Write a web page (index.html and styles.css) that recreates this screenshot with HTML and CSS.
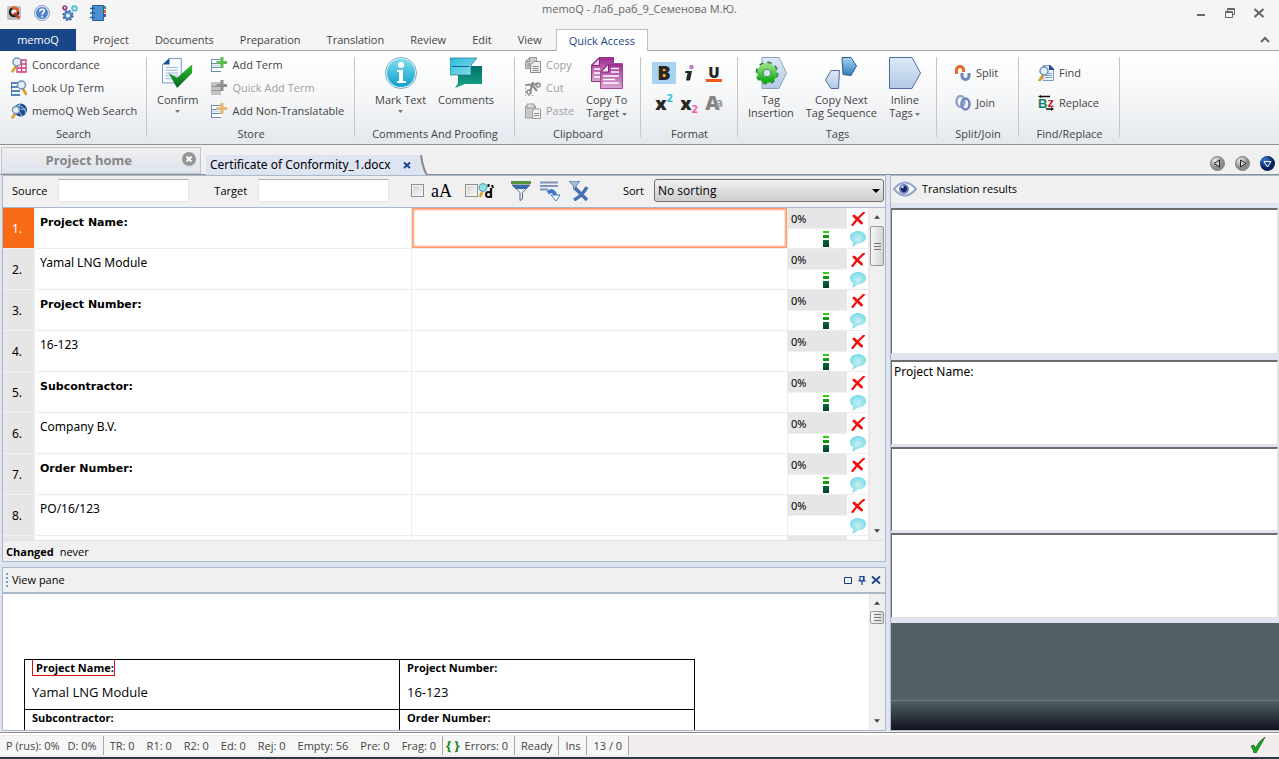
FILE: index.html
```html
<!DOCTYPE html>
<html lang="en">
<head>
<meta charset="utf-8">
<title>memoQ - Лаб_раб_9_Семенова М.Ю.</title>
<link rel="stylesheet" href="styles.css">
</head>
<body>
<svg class="defs" aria-hidden="true">
  <defs>
    <linearGradient id="gBlue" x1="0" y1="0" x2="0" y2="1"><stop offset="0" stop-color="#a9d2f3"/><stop offset="1" stop-color="#2f7fb8"/></linearGradient>
    <linearGradient id="gPale" x1="0" y1="0" x2="0" y2="1"><stop offset="0" stop-color="#dceaf8"/><stop offset="1" stop-color="#b3c9e4"/></linearGradient>
    <linearGradient id="gGreen" x1="0" y1="0" x2="0" y2="1"><stop offset="0" stop-color="#2fc522"/><stop offset="1" stop-color="#04602c"/></linearGradient>
    <linearGradient id="gGear" x1="0" y1="0" x2="0" y2="1"><stop offset="0" stop-color="#8fe07c"/><stop offset="1" stop-color="#12b012"/></linearGradient>
    <linearGradient id="gCyan" x1="0" y1="0" x2="0" y2="1"><stop offset="0" stop-color="#7fdcec"/><stop offset="1" stop-color="#0b9fd0"/></linearGradient>
    <linearGradient id="gTeal" x1="0" y1="0" x2="0" y2="1"><stop offset="0" stop-color="#00706a"/><stop offset="1" stop-color="#17a888"/></linearGradient>
    <linearGradient id="gAqua" x1="0" y1="0" x2="1" y2="1"><stop offset="0" stop-color="#2ab8d8"/><stop offset="1" stop-color="#8be4ec"/></linearGradient>
    <linearGradient id="gPurple" x1="0" y1="0" x2="0" y2="1"><stop offset="0" stop-color="#9c2b8e"/><stop offset="1" stop-color="#dba6d4"/></linearGradient>
    <radialGradient id="gBubble"><stop offset="0" stop-color="#c9eef2"/><stop offset="1" stop-color="#7cdde8"/></radialGradient>
    <radialGradient id="gBall" cx=".35" cy=".3"><stop offset="0" stop-color="#efefef"/><stop offset="1" stop-color="#8a8a8a"/></radialGradient>
    <radialGradient id="gNavy" cx=".35" cy=".3"><stop offset="0" stop-color="#3b7fd0"/><stop offset="1" stop-color="#08215c"/></radialGradient>
  </defs>
  <symbol id="i-lens" viewBox="0 0 16 16"><path d="M5 9 1.500 14.500" stroke="#dd9a1c" stroke-width="2.500" stroke-linecap="round"/><circle cx="6" cy="5" r="4" fill="#e2eff9" stroke="#7190b5" stroke-width="1.500"/></symbol>
  <symbol id="i-conc" viewBox="0 0 16 16"><path d="M6 3h9v12H6zM6 7h9M6 11h9M10.500 3v12" fill="#fff" stroke="#d8377c" stroke-width="1.300"/><use href="#i-lens"/></symbol>
  <symbol id="i-look" viewBox="0 0 16 16"><path d="M0 3h9M0 3v12h9M0 7h9M0 11h9" fill="none" stroke="#1d5fa8" stroke-width="1.500"/><path d="m12 9 3 5" stroke="#dd9a1c" stroke-width="2.500" stroke-linecap="round"/><circle cx="10.500" cy="5" r="4" fill="#e2eff9" stroke="#7190b5" stroke-width="1.500"/></symbol>
  <symbol id="i-web" viewBox="0 0 16 16"><circle cx="9.500" cy="7" r="6.500" fill="#1e4a90"/><path d="M6 2q8 1 9 9M4 9q5-4 11-3M9 1q-3 6 2 12" stroke="#a8c8ee" fill="none"/><path d="M4 11 1.500 14.500" stroke="#dd9a1c" stroke-width="2.500" stroke-linecap="round"/><circle cx="5" cy="7" r="3.500" fill="#e2eff9" stroke="#7190b5" stroke-width="1.300"/></symbol>
  <symbol id="i-rows" viewBox="0 0 16 16"><path d="M.5 3h10v11H.5z" fill="#fff"/><path d="M0 2.500h10M0 6.500h10M0 10.500h11M0 14.500h10M.5 3v11" fill="none" stroke="#6c8fba"/><path d="M1 8.500h9" stroke="#cfdcec" stroke-width="2"/></symbol>
  <symbol id="i-add" viewBox="0 0 16 16"><use href="#i-rows"/><path d="M11 0v11M5.500 5.500H16" stroke="#5dbd52" stroke-width="3"/></symbol>
  <symbol id="i-addgray" viewBox="0 0 16 16"><path d="M0 2h10v13H0z" fill="#c4c4c4"/><path d="M0 6.500h10M0 10.500h10" stroke="#999"/><path d="M11 0v11M5.500 5.500H16" stroke="#8f8f8f" stroke-width="3"/></symbol>
  <symbol id="i-addtan" viewBox="0 0 16 16"><use href="#i-rows"/><path d="M11 0v11M5.500 5.500H16" stroke="#e8b877" stroke-width="3"/></symbol>
  <symbol id="i-confirm" viewBox="0 0 34 32"><path d="M8 .5h12.500v26H.5V7z" fill="#f7faff" stroke="#6f90c5"/><path d="M8 0v7H1z" fill="#154a9c"/><path d="M4 10h13M4 13h13M4 16h13M4 19h13M4 22h13" stroke="#9ab0d4"/><path d="m7 16 9 5L32 7v9L16 32z" fill="url(#gGreen)"/></symbol>
  <symbol id="i-info" viewBox="0 0 32 32"><circle cx="16" cy="16" r="15.500" fill="#eef9fd" stroke="#76abc6"/><circle cx="16" cy="16" r="14" fill="url(#gCyan)"/><circle cx="16" cy="8" r="3" fill="#fff"/><path d="M12 13h6v11h3v2h-9v-2h2v-9h-2z" fill="#fff"/></symbol>
  <symbol id="i-comments" viewBox="0 0 32 32"><path d="M14 9h18v18H15l-10 4 3-5v-9h6z" fill="url(#gTeal)"/><path d="M0 1h27l-6 7v10H0z" fill="url(#gAqua)" stroke="#17758b" stroke-width=".7"/><path d="M2 9.500h17" stroke="#1c5a9c"/></symbol>
  <symbol id="i-copygray" viewBox="0 0 16 16"><path d="M4.500.5h7v11h-11v-7z" fill="#ccc" stroke="#999"/><path d="M4.500 1v3.500H1M2 7h4M2 9h3" fill="none" stroke="#8c8c8c"/><path d="M9 4.500h6.500v11h-10V8z" fill="#eee" stroke="#8c8c8c"/><path d="M7.500 9.500h6M7.500 11.500h6M7.500 13.500h6" stroke="#8c8c8c"/></symbol>
  <symbol id="i-cut" viewBox="0 0 16 16"><path d="M.5 4v11.500h9" fill="none" stroke="#aaa" stroke-dasharray="2 1.500"/><path d="m1 5 12-1M5 12l3-10M7 5l5 6" stroke="#8c8c8c" stroke-width="2.200"/><circle cx="13" cy="5" r="2" fill="none" stroke="#8c8c8c" stroke-width="1.500"/><circle cx="4" cy="12" r="2" fill="none" stroke="#8c8c8c" stroke-width="1.500"/></symbol>
  <symbol id="i-paste" viewBox="0 0 16 16"><path d="M.5 3h10v12H.5z" fill="#c8c8c8" stroke="#a0a0a0"/><path d="M2 1h7v4H2z" fill="#dedede" stroke="#999"/><path d="M9 6h6.500v9.500h-8V8z" fill="#f3f3f3" stroke="#999"/><path d="M9 10.500h5M9 12.500h5" stroke="#8c8c8c"/></symbol>
  <symbol id="i-copyto" viewBox="0 0 32 32"><path d="M8 .5h14.500v24H.5V8z" fill="url(#gPurple)" stroke="#92348a"/><path d="M8.500 1v7.500H1z" fill="#ecd0e8" stroke="#8c1f7e"/><path d="M3 12h6M3 16h6M3 20h6" stroke="#fff" stroke-width="1.500"/><path d="M17 6.500h14.500v25h-22v-17z" fill="url(#gPurple)" stroke="#a2499a"/><path d="M17.500 7v8H10z" fill="#f4e2f1" stroke="#8c1f7e"/><path d="M20 11.500h8M20 15h8M12 19h16M12 22.500h12M12 26h16" stroke="#fff" stroke-width="1.500"/></symbol>
  <symbol id="i-gear" viewBox="0 0 32 32"><path d="M7 .5h17L31.500 16 24 31.500H7z" fill="url(#gPale)" stroke="#8da3bd"/><circle cx="12" cy="16" r="9.500" fill="none" stroke="#3f7a4a" stroke-width="4" stroke-dasharray="4 3.460"/><circle cx="12" cy="16" r="7" fill="#d5e6f2" stroke="url(#gGear)" stroke-width="6"/><circle cx="12" cy="16" r="3.800" fill="#d5e6f2" stroke="#56875f"/></symbol>
  <symbol id="i-seq" viewBox="0 0 32 32"><path d="M17 .5h9L31.500 9 26 18.500l-8-1z" fill="url(#gBlue)" stroke="#2c5a97"/><path d="M6 13.500h8.500l-1 18H6L.5 23z" fill="url(#gPale)" stroke="#5066a8"/></symbol>
  <symbol id="i-tag" viewBox="0 0 32 32"><path d="M.5.5H23L31.500 16 23 31.500H.5z" fill="url(#gPale)" stroke="#4e6ba6"/></symbol>
  <symbol id="i-split" viewBox="0 0 16 16"><path d="M1.500 9V5a3.500 3.500 0 0 1 7 0v2" fill="none" stroke="#ee6424" stroke-width="3"/><path d="M7 8v3a3.500 3.500 0 0 0 7 0V8" fill="none" stroke="#6b86c0" stroke-width="3"/></symbol>
  <symbol id="i-join" viewBox="0 0 16 16"><g fill="none" stroke="#8fa3cc" stroke-width="2.500"><ellipse cx="5.500" cy="6.500" rx="4" ry="5.500"/><ellipse cx="10.500" cy="9" rx="4" ry="5.500" stroke="#6b86c0"/></g></symbol>
  <symbol id="i-find" viewBox="0 0 16 16"><path d="M5 .5h7L15.500 4v11.500H5z" fill="#edf4fc" stroke="#7899c8"/><path d="M11 0h1l4 4v1h-5z" fill="#154a9c"/><path d="M7 8.500h7M7 10.500h7M7 12.500h7" stroke="#7f9cc8"/><use href="#i-lens" y="1"/></symbol>
  <symbol id="i-arrows" viewBox="0 0 16 16"><path d="M0 1.500 3 0v.8h9v1.400H3V3zM16 14l-3-2v1.200H8v1.600h5V16z" fill="#111"/></symbol>
  <symbol id="i-x" viewBox="0 0 14 14"><path d="M3 4 10.500 11" fill="none" stroke="#f01010" stroke-width="3" stroke-linecap="round"/><path d="M13 .5C9 4 5 8 1.500 13" fill="none" stroke="#f01010" stroke-width="2.200" stroke-linecap="round"/></symbol>
  <symbol id="i-bubble" viewBox="0 0 16 16"><path d="M8 0c4.400 0 8 2.500 8 6.200s-3.600 6.200-8 6.200L2 16l1.500-4.500C1.500 10.500 0 8.500 0 6.200 0 2.500 3.600 0 8 0z" fill="url(#gBubble)"/></symbol>
  <symbol id="i-up" viewBox="0 0 7 4"><path d="M3.500 0 7 4H0z" fill="#444"/></symbol>
  <symbol id="i-down" viewBox="0 0 7 4"><path d="M3.500 4 7 0H0z" fill="#444"/></symbol>
  <symbol id="i-caret" viewBox="0 0 5 3"><path d="M2.500 3 5 0H0z" fill="#777"/></symbol>
</svg>

<header class="titlebar">
  <div class="quick">
    <svg class="i16" viewBox="0 0 16 16"><rect x="1" y="1" width="14" height="14" rx="2" fill="#c3bfba"/><circle cx="8" cy="7" r="4" fill="#eee" stroke="#222" stroke-width="2.500"/><path d="M6 3.200A4 4 0 0 1 12 7" fill="none" stroke="#ef5a24" stroke-width="2.500"/><path d="m8 8 5 5" stroke="#c9371c" stroke-width="2.500"/></svg>
    <svg class="i16" viewBox="0 0 16 16"><circle cx="8" cy="8" r="7.500" fill="#dfe6f0" stroke="#8ba3c9"/><circle cx="8" cy="8" r="6" fill="#4f83cf"/><path d="M5.800 6.500c0-3 4.600-2.900 4.600-.4 0 1.600-2.300 1.500-2.300 3.600M8.100 10.800v1.700" fill="none" stroke="#fff" stroke-width="1.500"/></svg>
    <svg class="i16" viewBox="0 0 16 16"><circle cx="6" cy="10.500" r="3.200" fill="none" stroke="#4f86c6" stroke-width="2.500"/><circle cx="6" cy="10.500" r="4.800" fill="none" stroke="#2d5d9c" stroke-width="1.500" stroke-dasharray="2 1.770"/><circle cx="2.800" cy="2.800" r="1.800" fill="none" stroke="#8c3a8c" stroke-width="1.700"/><circle cx="12.500" cy="3.500" r="2.300" fill="none" stroke="#4fc3dc" stroke-width="2"/></svg>
    <svg class="i16" viewBox="0 0 16 16"><path d="M12 1h4v3h-4z" fill="#3aa050"/><path d="M12 5h4v3h-4z" fill="#ee6424"/><path d="M12 9h4v3h-4z" fill="#7b3a96"/><path d="M2.500.5h11v15h-11z" fill="#4d91cd" stroke="#25609d"/><path d="M0 3.500h5M0 8h5M0 12.500h5" stroke="#25609d" stroke-width="1.500"/></svg>
  </div>
  <h1 class="title">memoQ - Лаб_раб_9_Семенова М.Ю.</h1>
  <div class="winbtns">
    <button aria-label="Minimize"><svg class="i12" viewBox="0 0 12 12"><path d="M2 8h8" stroke="#666" stroke-width="2"/></svg></button>
    <button aria-label="Restore"><svg class="i12" viewBox="0 0 12 12"><path d="M1.500 4.500h7v6h-7zM1 5.500h8M3.500 4V1.500h7v6H9M3 2.500h8" fill="none" stroke="#666"/></svg></button>
    <button aria-label="Close"><svg class="i12" viewBox="0 0 12 12"><path d="m1.500 2 9 8m0-8-9 8" stroke="#666" stroke-width="2.200"/></svg></button>
  </div>
</header>

<nav class="tabs">
  <button class="tab tab-main">memoQ</button>
  <button class="tab">Project</button>
  <button class="tab">Documents</button>
  <button class="tab">Preparation</button>
  <button class="tab">Translation</button>
  <button class="tab">Review</button>
  <button class="tab">Edit</button>
  <button class="tab">View</button>
  <button class="tab tab-active">Quick Access</button>
  <button class="collapse" aria-label="Collapse ribbon"><svg class="i10" viewBox="0 0 10 10"><path d="m1 7 4-4 4 4" fill="none" stroke="#666" stroke-width="2"/></svg></button>
</nav>

<section class="ribbon">
  <div class="group g-search">
    <div class="stack">
      <button class="cmd"><svg class="i16"><use href="#i-conc"/></svg>Concordance</button>
      <button class="cmd"><svg class="i16"><use href="#i-look"/></svg>Look Up Term</button>
      <button class="cmd"><svg class="i16"><use href="#i-web"/></svg>memoQ Web Search</button>
    </div>
    <h2>Search</h2>
  </div>
  <div class="group g-store">
    <div class="items">
      <button class="big"><svg class="i32"><use href="#i-confirm"/></svg><span>Confirm</span><svg class="caret"><use href="#i-caret"/></svg></button>
      <div class="stack">
        <button class="cmd"><svg class="i16"><use href="#i-add"/></svg>Add Term</button>
        <button class="cmd" disabled><svg class="i16"><use href="#i-addgray"/></svg>Quick Add Term</button>
        <button class="cmd"><svg class="i16"><use href="#i-addtan"/></svg>Add Non-Translatable</button>
      </div>
    </div>
    <h2>Store</h2>
  </div>
  <div class="group g-comments">
    <div class="items">
      <button class="big"><svg class="i32"><use href="#i-info"/></svg><span>Mark Text</span><svg class="caret"><use href="#i-caret"/></svg></button>
      <button class="big"><svg class="i32"><use href="#i-comments"/></svg><span>Comments</span></button>
    </div>
    <h2>Comments And Proofing</h2>
  </div>
  <div class="group g-clip">
    <div class="items">
      <div class="stack">
        <button class="cmd" disabled><svg class="i16"><use href="#i-copygray"/></svg>Copy</button>
        <button class="cmd" disabled><svg class="i16"><use href="#i-cut"/></svg>Cut</button>
        <button class="cmd" disabled><svg class="i16"><use href="#i-paste"/></svg>Paste</button>
      </div>
      <button class="big"><svg class="i32"><use href="#i-copyto"/></svg><span>Copy To</span><span>Target <svg class="caret"><use href="#i-caret"/></svg></span></button>
    </div>
    <h2>Clipboard</h2>
  </div>
  <div class="group g-format">
    <div class="formats">
      <button class="fmt fmt-on"><b>B</b></button>
      <button class="fmt fmt-i" aria-label="Italic"><svg class="i16" viewBox="0 0 16 16"><circle cx="10.500" cy="2" r="2.200" fill="#b77ac0"/><path d="M4.500 6H11L9 15.500H5L6.500 8H4z" fill="#262626"/></svg></button>
      <button class="fmt fmt-u"><b>U</b></button>
      <button class="fmt"><b>x</b><sup>2</sup></button>
      <button class="fmt"><b>x</b><sub>2</sub></button>
      <button class="fmt fmt-a"><b>A</b><small>a</small></button>
    </div>
    <h2>Format</h2>
  </div>
  <div class="group g-tags">
    <div class="items">
      <button class="big"><svg class="i32"><use href="#i-gear"/></svg><span>Tag</span><span>Insertion</span></button>
      <button class="big"><svg class="i32"><use href="#i-seq"/></svg><span>Copy Next</span><span>Tag Sequence</span></button>
      <button class="big"><svg class="i32"><use href="#i-tag"/></svg><span>Inline</span><span>Tags <svg class="caret"><use href="#i-caret"/></svg></span></button>
    </div>
    <h2>Tags</h2>
  </div>
  <div class="group g-split">
    <div class="stack stack-two">
      <button class="cmd"><svg class="i16"><use href="#i-split"/></svg>Split</button>
      <button class="cmd"><svg class="i16"><use href="#i-join"/></svg>Join</button>
    </div>
    <h2>Split/Join</h2>
  </div>
  <div class="group g-find">
    <div class="stack stack-two">
      <button class="cmd"><svg class="i16"><use href="#i-find"/></svg>Find</button>
      <button class="cmd"><span class="bz"><svg class="i16"><use href="#i-arrows"/></svg><b>B</b><i>z</i></span>Replace</button>
    </div>
    <h2>Find/Replace</h2>
  </div>
</section>

<div class="doctabs">
  <button class="doc-home">Project home<svg class="i14" viewBox="0 0 14 14"><circle cx="7" cy="7" r="7" fill="#969696"/><path d="m4.500 4.500 5 5m0-5-5 5" stroke="#fff" stroke-width="2"/></svg></button>
  <button class="doc-open">Certificate of Conformity_1.docx<svg class="i8" viewBox="0 0 8 8"><path d="m1 1.500 6 5.500m0-5.500L1 7" stroke="#153f8f" stroke-width="1.800"/></svg></button>
  <svg class="slant" viewBox="0 0 10 20"><path d="M0 0h3l5 20H0z" fill="#dfe4f2"/><path d="M3 0q2 14 6 20" fill="none" stroke="#8b8b8b" stroke-width="2"/></svg>
  <div class="nav">
    <button aria-label="Previous"><svg class="i15" viewBox="0 0 15 15"><circle cx="7.500" cy="7.500" r="7" fill="url(#gBall)" stroke="#808080"/><path d="M9.500 4v7L4 7.500z" fill="#ccc" stroke="#222"/></svg></button>
    <button aria-label="Next"><svg class="i15" viewBox="0 0 15 15"><circle cx="7.500" cy="7.500" r="7" fill="url(#gBall)" stroke="#808080"/><path d="M5.500 4v7L11 7.500z" fill="#ccc" stroke="#222"/></svg></button>
    <button aria-label="List"><svg class="i15" viewBox="0 0 15 15"><circle cx="7.500" cy="7.500" r="7.500" fill="url(#gNavy)"/><path d="M4 5.500h7L7.500 11z" fill="#164a94" stroke="#fff"/></svg></button>
  </div>
</div>

<main class="work">
  <div class="left">
    <section class="editor">
      <div class="filter">
        <label for="src">Source</label><input id="src" class="box" type="text">
        <label for="trg" class="lab-t">Target</label><input id="trg" class="box" type="text">
        <label class="chk chk-a"><input type="checkbox"><span>aA</span></label>
        <label class="chk"><input type="checkbox" aria-label="Regular expression"><svg class="i16" viewBox="0 0 16 16"><path d="m4 9-2 5" stroke="#e0a31c" stroke-width="2.500"/><circle cx="5" cy="4.500" r="4" fill="#8fe0ea" stroke="#5a9cb5"/><path d="M10.500 1v3M14 2l1 3" stroke="#111" stroke-width="2"/><path d="M13 5v10" stroke="#111" stroke-width="2.200"/><circle cx="10.500" cy="11.500" r="2.500" fill="#fff" stroke="#111" stroke-width="2"/></svg></label>
        <div class="tools">
          <button aria-label="Filter"><svg class="i20" viewBox="0 0 20 20"><path d="M0 0h20v3H0z" fill="#57963c"/><path d="M1 4h18l-7.500 7.500V18L9 19.500v-8z" fill="#edf2f9" stroke="#5d6980"/><path d="M1 4h18l-4 4H5z" fill="#3c68ad"/></svg></button>
          <button aria-label="Go to next"><svg class="i20" viewBox="0 0 20 20"><path d="M0 1.500h18M0 5h18M0 8.500h8" stroke="#7f93bd" stroke-width="2"/><path d="M8 12q5-5 7.500 3" fill="none" stroke="#3f78c4" stroke-width="4"/><path d="M11 14h9l-4 6z" fill="#fff" stroke="#3f78c4"/></svg></button>
          <button aria-label="Clear filter"><svg class="i20" viewBox="0 0 20 20"><path d="M0 0h11L7 5v5L4.500 8V5z" fill="#a9bbd8" stroke="#5d7fb8"/><path d="m6 7 12 12M18 6Q13 15 5 19" fill="none" stroke="#4772b2" stroke-width="3.500"/></svg></button>
        </div>
        <label for="sort">Sort</label>
        <select id="sort"><option>No sorting</option></select>
      </div>
      <div class="gridwrap">
        <div class="rows">
          <table class="seg">
            <colgroup><col class="c-num"><col><col><col class="c-st"></colgroup>
            <tr class="cur"><th>1.</th><td><b>Project Name:</b></td><td class="tgt"></td><td class="st"><div class="stat"><span>0%</span><svg class="i14"><use href="#i-x"/></svg><i></i><svg class="i16"><use href="#i-bubble"/></svg></div></td></tr>
            <tr><th>2.</th><td>Yamal LNG Module</td><td></td><td class="st"><div class="stat"><span>0%</span><svg class="i14"><use href="#i-x"/></svg><i></i><svg class="i16"><use href="#i-bubble"/></svg></div></td></tr>
            <tr><th>3.</th><td><b>Project Number:</b></td><td></td><td class="st"><div class="stat"><span>0%</span><svg class="i14"><use href="#i-x"/></svg><i></i><svg class="i16"><use href="#i-bubble"/></svg></div></td></tr>
            <tr><th>4.</th><td>16-123</td><td></td><td class="st"><div class="stat"><span>0%</span><svg class="i14"><use href="#i-x"/></svg><i></i><svg class="i16"><use href="#i-bubble"/></svg></div></td></tr>
            <tr><th>5.</th><td><b>Subcontractor:</b></td><td></td><td class="st"><div class="stat"><span>0%</span><svg class="i14"><use href="#i-x"/></svg><i></i><svg class="i16"><use href="#i-bubble"/></svg></div></td></tr>
            <tr><th>6.</th><td>Company B.V.</td><td></td><td class="st"><div class="stat"><span>0%</span><svg class="i14"><use href="#i-x"/></svg><i></i><svg class="i16"><use href="#i-bubble"/></svg></div></td></tr>
            <tr><th>7.</th><td><b>Order Number:</b></td><td></td><td class="st"><div class="stat"><span>0%</span><svg class="i14"><use href="#i-x"/></svg><i></i><svg class="i16"><use href="#i-bubble"/></svg></div></td></tr>
            <tr><th>8.</th><td>PO/16/123</td><td></td><td class="st"><div class="stat"><span>0%</span><svg class="i14"><use href="#i-x"/></svg><i class="none"></i><svg class="i16"><use href="#i-bubble"/></svg></div></td></tr>
            <tr><th></th><td></td><td></td><td class="st"><div class="stat"><span></span><svg class="i14"><use href="#i-x"/></svg></div></td></tr>
          </table>
        </div>
        <div class="scroll"><svg class="arrow"><use href="#i-up"/></svg><div class="thumb"></div><svg class="arrow arrow-end"><use href="#i-down"/></svg></div>
      </div>
      <p class="changed"><b>Changed</b> <span>never</span></p>
    </section>
    <section class="viewpane">
      <div class="vp-head"><i class="grip"></i><h2>View pane</h2>
        <button aria-label="Maximize"><svg class="i10" viewBox="0 0 10 10"><path d="M1.500 2.500h7v6h-7z" fill="none" stroke="#153f8f"/></svg></button>
        <button aria-label="Pin"><svg class="i10" viewBox="0 0 10 10"><path d="M3 5.500V1.500h4v4M6.500 1v5M1.500 5.800h7M5 6v4" fill="none" stroke="#153f8f" stroke-width="1.200"/></svg></button>
        <button aria-label="Close"><svg class="i10" viewBox="0 0 10 10"><path d="m1 1.500 8 7m0-7-8 7" stroke="#153f8f" stroke-width="1.700"/></svg></button>
      </div>
      <div class="vp-body">
        <div class="page">
          <table class="preview">
            <tr><td class="p-first"><b class="mark">Project Name:</b><p>Yamal LNG Module</p></td><td><b>Project Number:</b><p>16-123</p></td></tr>
            <tr><td><b>Subcontractor:</b></td><td><b>Order Number:</b></td></tr>
          </table>
        </div>
        <div class="scroll"><svg class="arrow"><use href="#i-up"/></svg><div class="thumb thumb-s"></div><svg class="arrow arrow-end"><use href="#i-down"/></svg></div>
      </div>
    </section>
  </div>
  <aside class="right">
    <div class="r-head"><svg class="eye" viewBox="0 0 24 16"><path d="M1 8Q12-5 23 8 12 21 1 8z" fill="#f6f8fc" stroke="#98a4cb" stroke-width="2"/><circle cx="11" cy="8" r="5" fill="#6c80bf"/><circle cx="11" cy="8" r="3" fill="#14225e"/><circle cx="9.500" cy="6" r="1.200" fill="#dbe3f7"/></svg><h2>Translation results</h2></div>
    <div class="pane pane-tall"></div>
    <div class="pane">Project Name:</div>
    <div class="pane"></div>
    <div class="pane"></div>
    <div class="dark"><div class="glow"></div></div>
  </aside>
</main>

<footer class="status">
  <div class="s-cell s-one"><span>P (rus): 0%</span><span>D: 0%</span></div>
  <div class="s-cell s-two"><span>TR: 0</span><span>R1: 0</span><span>R2: 0</span><span>Ed: 0</span><span>Rej: 0</span><span>Empty: 56</span><span>Pre: 0</span><span>Frag: 0</span></div>
  <div class="s-cell s-err"><b>{ }</b><span>Errors: 0</span></div>
  <div class="s-cell">Ready</div>
  <div class="s-cell">Ins</div>
  <div class="s-cell">13 / 0</div>
  <svg class="i16 ok" viewBox="0 0 16 16"><path d="m1 9 3-1 1.500 3Q9 4 15 0q-3 6-9 16H4Q3 12 1 9z" fill="#18a51c" stroke="#064d14" stroke-width=".6"/></svg>
</footer>
</body>
</html>
```
FILE: styles.css
```css
* { box-sizing: border-box; }
body {
  margin: 0; height: 100vh; overflow: hidden;
  display: flex; flex-direction: column;
  font: 11px/16px "Open Sans", "Noto Sans", sans-serif;
  color: #444; background: #f0f0f0;
}
h1, h2, p { margin: 0; font-size: inherit; font-weight: normal; }
button { margin: 0; padding: 0; border: 0; background: none; font: inherit; color: inherit; }
svg { display: block; flex: none; }
.defs { position: absolute; width: 0; height: 0; }
.i8 { width: 8px; height: 8px; }
.i10 { width: 10px; height: 10px; }
.i12 { width: 12px; height: 12px; }
.i14 { width: 14px; height: 14px; }
.i15 { width: 15px; height: 15px; }
.i16 { width: 16px; height: 16px; }
.i20 { width: 20px; height: 20px; }
.i32 { width: 32px; height: 32px; }

.titlebar { height: 29px; display: grid; grid-template-columns: 1fr auto 1fr; background: #f5f5f5; flex: none; }
.quick { display: flex; gap: 12px; padding: 5px 6px; }
.title { color: #666; padding-top: 1px; }
.winbtns { display: flex; gap: 17px; justify-content: flex-end; padding: 7px 14px 0 0; align-items: flex-start; }

.tabs { display: flex; flex: none; height: 22px; background: #f5f5f5; box-shadow: inset 0 -1px #a3a8b0; }
.tab { padding: 0 12px; margin-left: 2px; line-height: 22px; }
.tab-main { background: #194688; color: #fff; width: 76px; margin: 0 3px 0 0; }
.tab-active { color: #194688; background: #fff; border: 1px solid #bcbfc5; border-bottom: 0; }
.collapse { margin-left: auto; padding-right: 9px; }

.ribbon {
  display: flex; flex: none; height: 94px; padding-top: 2px;
  background: linear-gradient(#fff, #f7f8f9 45%, #e4e8ed);
  border-bottom: 1px solid #8a929b;
}
.group { display: flex; flex-direction: column; background: linear-gradient(#c3c6ca, #c3c6ca) right 4px / 1px 80px no-repeat; }
.group h2 { text-align: center; line-height: 20px; padding-top: 2px; }
.stack { display: flex; flex-direction: column; height: 69px; align-items: flex-start; }
.stack-two { gap: 7px; padding-top: 8px; }
.cmd { display: flex; align-items: center; gap: 5px; height: 23px; white-space: nowrap; }
.cmd:disabled { color: #a0a0a0; }
.items { display: flex; height: 69px; }
.big { display: flex; flex-direction: column; align-items: center; padding-top: 4px; line-height: 13px; white-space: nowrap; }
.big .i32 { margin-bottom: 4px; }
.big > .caret { margin-top: 4px; }
.caret { width: 5px; height: 3px; display: inline-block; vertical-align: middle; }
.g-search { width: 147px; }
.g-search .stack { padding-left: 11px; }
.g-store { width: 208px; }
.g-store .items { padding-left: 10px; gap: 13px; }
.g-comments { width: 160px; }
.g-comments .items { padding-left: 20px; gap: 12px; }
.g-clip { width: 126px; }
.g-clip .items { padding-left: 10px; gap: 12px; }
.g-format { width: 97px; }
.g-tags { width: 199px; }
.g-tags .items { padding-left: 10px; gap: 12px; }
.g-split { width: 82px; }
.g-split .stack { padding-left: 18px; }
.g-find { width: 101px; }
.g-find .stack { padding-left: 19px; }

.formats { display: grid; grid-template-columns: repeat(3, 24px); grid-auto-rows: 22px; gap: 8px 1px; height: 69px; padding: 9px 0 0 11px; font-family: "Noto Sans", sans-serif; color: #262626; }
.fmt { position: relative; line-height: 20px; font-size: 18px; display: flex; justify-content: center; align-items: center; }
.fmt b { font-weight: 900; }
.fmt-on { background: linear-gradient(#f5b21b, #f5b21b) center / 5px 9px no-repeat, #a9d3f0; font-size: 20px; }
.fmt-u b { font-size: 15px; line-height: 14px; border-bottom: 3px solid #f4591a; padding: 0 2px; }
.fmt sup, .fmt sub { font-size: 11px; line-height: 11px; font-weight: bold; color: #35c3d3; align-self: flex-start; }
.fmt sub { color: #ee5fae; align-self: flex-end; }
.fmt-a { color: #858585; font-size: 20px; }
.fmt-a small { font-size: 12px; line-height: 12px; font-weight: bold; margin-left: -4px; color: #999; }
.bz { display: flex; align-items: center; width: 16px; height: 16px; position: relative; font: 13px/14px "Liberation Sans", sans-serif; }
.bz svg { position: absolute; inset: 0; }
.bz b { color: #138060; padding-top: 3px; }
.bz i { color: #d3212c; font-weight: bold; font-style: normal; }

.doctabs { display: flex; flex: none; height: 30px; padding: 2px 4px 0 1px; box-shadow: inset 0 -1px #8a929b; }
.doc-home { width: 200px; height: 27px; border: 1px solid #c4c4c4; background: linear-gradient(#efefef, #dfe3ee); font-size: 13px; font-weight: bold; color: #858585; display: flex; align-items: center; justify-content: flex-end; gap: 50px; padding: 0 4px 1px 0; }
.doc-home svg { margin-bottom: 3px; }
.doc-open { margin: 8px 0 0 5px; height: 20px; background: #dfe4f2; color: #000; padding: 0 7px 0 4px; font: 12px/20px "Noto Sans", sans-serif; display: flex; align-items: center; gap: 12px; }
.slant { width: 10px; height: 20px; margin-top: 8px; }
.nav { display: flex; gap: 10px; margin-left: auto; padding-top: 4px; }

.work { flex: 1; min-height: 0; display: grid; grid-template-columns: 884fr 389fr; gap: 4px; padding-left: 2px; background: #dfe4f0; color: #000; }
.left { display: flex; flex-direction: column; gap: 5px; min-width: 0; min-height: 0; }
.editor { flex: 1; min-height: 0; display: flex; flex-direction: column; background: #f0f0f0; border: 1px solid #a9b9c9; }
.filter { position: relative; display: flex; align-items: center; height: 32px; flex: none; padding: 0 1px 2px 9px; border-bottom: 1px solid #a9b9c9; }
.filter::after { content: ""; position: absolute; right: 5px; top: 13px; border: 4px solid transparent; border-top-color: #000; border-bottom: 0; pointer-events: none; }
.box { width: 131px; height: 23px; border: 1px solid #e2e4ea; border-top-color: #abadb3; margin-left: 11px; background: #fff; }
.lab-t { margin-left: 25px; }
.chk { display: flex; align-items: center; }
.chk input { appearance: none; width: 13px; height: 13px; margin: 0; border: 1px solid #8e8f8f; background: linear-gradient(135deg, #cfcfcf, #fafafa); box-shadow: inset 0 0 0 1px #f4f4f4; }
.chk-a { margin: 0 14px 0 22px; gap: 7px; font: 18px/20px "Liberation Serif", serif; }
.chk-a span { width: 20px; }
.tools { display: flex; gap: 9px; margin: 0 auto 0 17px; }
select { appearance: none; width: 230px; height: 23px; margin-left: 10px; padding: 0 3px; border: 1px solid #707070; border-radius: 3px; font: inherit; font-size: 12px; color: #000; background: linear-gradient(#f2f2f2, #ddd 50%, #cfcfcf); }

.gridwrap { flex: 1; min-height: 0; display: flex; background: #fff; }
.rows { flex: 1; overflow: hidden; }
.seg { width: 100%; table-layout: fixed; border-collapse: separate; border-spacing: 0; font: 12px/16px "Noto Sans", sans-serif; }
.c-num { width: 32px; }
.c-st { width: 81px; }
.seg tr { height: 41px; }
.seg th { background: #e6e6e6; font-weight: normal; text-align: left; padding: 2px 0 0 9px; font-size: 12px; border: solid #f0f0f0; border-width: 0 1px 1px 0; }
.seg .cur th { background: #f96a17; color: #fff; }
.seg td { vertical-align: top; padding: 6px 5px; border: solid #ececec; border-width: 0 1px 1px 0; }
.seg td b { font-family: "DejaVu Sans", sans-serif; font-size: 11px; }
.seg td.tgt { box-shadow: inset 0 0 0 1px #ff9b66, inset 0 0 0 2px #ffb692, inset 0 0 0 3px #ffe3d6; }
.seg td.st { padding: 0; }
.stat { display: grid; grid-template-columns: 59px 20px; grid-template-rows: 21px 19px; column-gap: 1px; align-items: center; justify-items: center; height: 40px; }
.stat span { align-self: stretch; justify-self: stretch; background: #e6e6e6; border-bottom: 1px solid #f0f0f0; font-size: 11px; line-height: 21px; padding-left: 3px; }
.stat i { width: 6px; height: 16px; margin-left: 17px; background: linear-gradient(#2bd411 0 2px, #fff 2px 4px, #149a10 4px 7px, #fff 7px 9px, #0a6b3a 9px, #03402a); }
.stat .none { visibility: hidden; }

.scroll { width: 16px; flex: none; background: #f0f0f0; display: flex; flex-direction: column; align-items: center; padding: 7px 1px 7px 0; border-left: 1px solid #e8e8e8; }
.arrow { width: 6px; height: 4px; }
.arrow-end { margin-top: auto; }
.thumb { width: 14px; height: 40px; margin-top: 7px; border: 1px solid #979797; border-radius: 2px; background: linear-gradient(#777 0 1px, transparent 1px 3px, #777 3px 4px, transparent 4px 6px, #777 6px 7px) center / 7px 7px no-repeat, linear-gradient(90deg, #f6f6f6, #d4d4d4); }
.thumb-s { height: 13px; margin-top: 6px; }
.changed { height: 21px; flex: none; padding-left: 3px; line-height: 21px; border-top: 1px solid #dfe0ea; }
.changed span { padding-left: 3px; }

.viewpane { height: 164px; flex: none; display: flex; flex-direction: column; border: 1px solid #a9b9c9; background: #f0f0f0; }
.vp-head { display: flex; align-items: center; gap: 4px; height: 24px; flex: none; padding: 0 4px 0 3px; }
.vp-head h2 { margin-right: auto; }
.grip { width: 2px; height: 14px; background: repeating-linear-gradient(#69a0dc 0 2px, transparent 2px 4px); }
.vp-body { flex: 1; min-height: 0; display: flex; border-top: 2px solid #a9b9c9; background: #fff; }
.page { flex: 1; overflow: hidden; padding: 65px 0 0 21px; }
.preview { width: 671px; border-collapse: collapse; table-layout: fixed; line-height: 16px; }
.preview td { border: 1px solid #000; padding: 0 7px; height: 50px; vertical-align: top; }
.p-first { width: 375px; }
.preview p { font-size: 13px; line-height: 18px; padding-top: 7px; }
.preview b { display: inline-block; height: 16px; vertical-align: top; }
.preview .mark { border: solid #e01010; border-width: 0 1px 1px; padding-left: 3px; }

.right { min-width: 0; min-height: 0; display: flex; flex-direction: column; gap: 2px; border: solid #a9b9c9; border-width: 1px 0 1px 1px; }
.r-head { height: 27px; flex: none; display: flex; align-items: center; gap: 5px; padding: 0 2px 2px; margin-bottom: 3px; background: #f0f0f0; }
.eye { width: 24px; height: 16px; }
.pane { flex: 85 1 85px; padding: 2px; margin-right: 1px; background: #fff; border: 1px solid #e3e3e3; border-top: 2px solid #6e6e6e; border-left: 1px solid #6e6e6e; font: 12px/16px "Noto Sans", sans-serif; }
.pane-tall { flex: 146 1 146px; margin-bottom: 4px; }
.dark { flex: 107 1 107px; margin-top: 3px; background: #516064; display: flex; align-items: flex-end; }
.glow { flex: 1; height: 30px; border-top: 1px solid #6f757d; background: linear-gradient(#516064, #12121f); }

.status { flex: none; height: 27px; display: flex; align-items: center; border-top: 1px solid #8c8c8c; border-bottom: 2px solid #2e3a44; background: linear-gradient(#fff 0 2px, #f0edec 2px); margin-top: 1px; padding-right: 13px; }
.s-cell { height: 19px; line-height: 19px; padding: 0 6px; border-right: 1px solid #a9a9a9; display: flex; background: #f6f6f6; white-space: nowrap; }
.s-one { gap: 8px; }
.s-two { gap: 12px; }
.s-err { gap: 5px; padding-left: 3px; }
.s-err b { color: #128012; font-size: 13px; }
.ok { margin-left: auto; }
```
